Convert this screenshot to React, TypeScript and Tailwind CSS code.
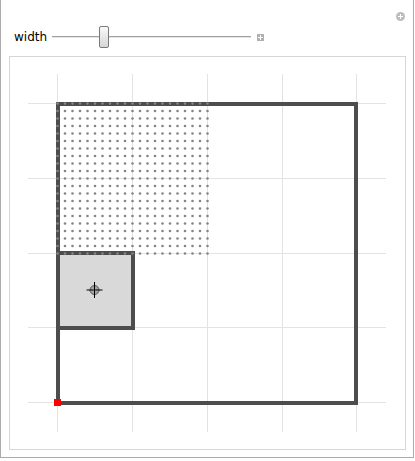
import React from "react";

const dots: React.ReactNode[] = [];
for (let i = 0; i < 21; i++) {
  for (let j = 0; j < 21; j++) {
    dots.push(
      <circle key={`${i}-${j}`} cx={57.5 + i * 7.5} cy={103.5 + j * 7.5} r={1.3} fill="#858585" />
    );
  }
}

function PlusCircle() {
  return (
    <svg width={9} height={9} viewBox="0 0 9 9" className="block">
      <circle cx={4.5} cy={4.5} r={4.5} fill="#bdbdbd" />
      <rect x={4} y={2} width={1} height={5} fill="#fff" />
      <rect x={2} y={4} width={5} height={1} fill="#fff" />
    </svg>
  );
}

function PlusSquare() {
  return (
    <svg width={7} height={7} viewBox="0 0 7 7" className="block">
      <rect x={0} y={0} width={7} height={7} fill="#b0b0b0" />
      <rect x={3} y={1} width={1} height={5} fill="#fff" />
      <rect x={1} y={3} width={5} height={1} fill="#fff" />
    </svg>
  );
}

function TrackLine({ w }: { w: number }) {
  return <div className="h-[2px] border-t border-[#a0a0a0] bg-[#e6e6e6]" style={{ width: w }} />;
}

export default function App() {
  const vx = [57.5, 132.5, 207.5, 282.5, 356.5];
  const hy = [103.5, 178.5, 253.5, 327.5, 402.5];
  return (
    <div className="w-[415px] h-[461px] bg-white" style={{ fontFamily: '"DejaVu Sans", Verdana, sans-serif' }}>
      <div className="w-[414px] h-[458px] border-x border-b border-[#ababab] bg-white pt-[12px]">
        <div className="flex justify-end pr-[8px] h-[14px]">
          <PlusCircle />
        </div>
        <div className="flex items-center h-[22px] pl-[13px]">
          <span className="text-[12px] leading-none text-black w-[38px]">width</span>
          <div className="flex items-center w-[199px] h-[22px]">
            <TrackLine w={47} />
            <div className="w-[10px] h-[22px] rounded-[2px] border border-[#7a7a7a] bg-gradient-to-b from-[#fafafa] to-[#d6d6d6]" />
            <TrackLine w={142} />
          </div>
          <div className="ml-[6px]">
            <PlusSquare />
          </div>
        </div>
        <div className="ml-[8px] mt-[8px] w-[397px] h-[394px] border border-[#d6d6d6]">
          <svg width={395} height={392} viewBox="10 57 395 392" className="block">
            {vx.map((x) => (
              <line key={x} x1={x} y1={74} x2={x} y2={432} stroke="#e3e3e3" strokeWidth={1} />
            ))}
            {hy.map((y) => (
              <line key={y} x1={28} y1={y} x2={386} y2={y} stroke="#e3e3e3" strokeWidth={1} />
            ))}
            <rect x={58} y={104} width={298} height={299} fill="none" stroke="#4d4d4d" strokeWidth={4} />
            <rect x={58} y={253} width={75} height={75} fill="#d9d9d9" stroke="#4d4d4d" strokeWidth={4} />
            {dots}
            <circle cx={94.5} cy={290} r={4.5} fill="#a3a3a3" stroke="#5a5a5a" strokeWidth={1} />
            <circle cx={94.5} cy={290} r={1.5} fill="#c8c8c8" />
            <line x1={86.5} y1={290} x2={102.5} y2={290} stroke="#000" strokeWidth={1} />
            <line x1={94.5} y1={282} x2={94.5} y2={298} stroke="#000" strokeWidth={1} />
            <rect x={54} y={399} width={7} height={7} fill="#ff0000" />
          </svg>
        </div>
      </div>
    </div>
  );
}
